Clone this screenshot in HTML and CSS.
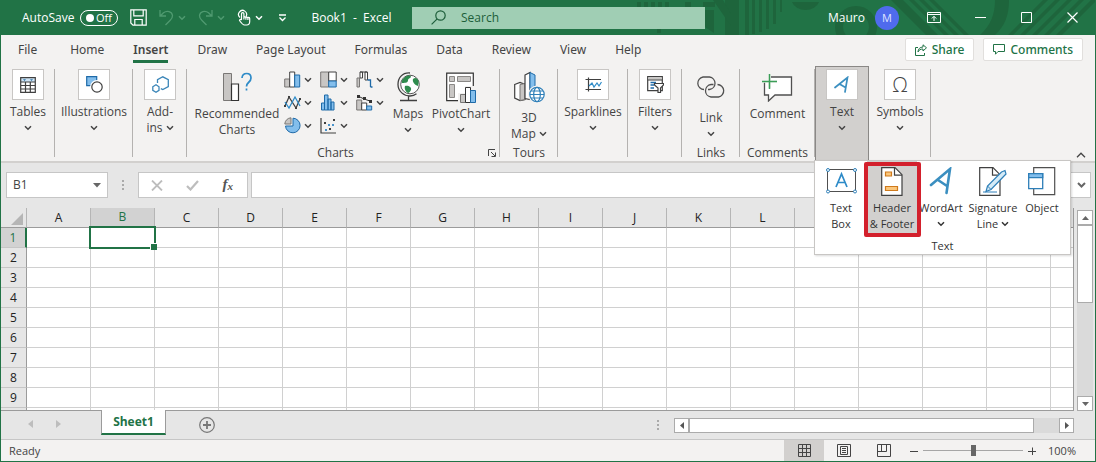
FILE: index.html
```html
<!DOCTYPE html>
<html lang="en">
<head>
<meta charset="utf-8">
<title>Book1 - Excel</title>
<link rel="stylesheet" href="styles.css">
</head>
<body>
<svg class="defs" aria-hidden="true">
  <symbol id="chev" viewBox="0 0 8 6"><path d="M1 1.2 4 4.2 7 1.2" fill="none" stroke="currentColor" stroke-width="1.5"/></symbol>
</svg>
<div class="window">
  <header class="titlebar">
    <svg class="pattern" viewBox="0 0 460 35" width="460" height="35" aria-hidden="true">
      <g fill="#1e653c">
        <path d="M2 2h4v5H2zM9 2h4v5H9zM16 2h4v5h-4zM23 2h4v5h-4zM30 2h4v5h-4zM50 2h6v5h-6zM68 2h12v5H68zM22 29h4v4h-4zM70 10h9v23l-9-6zM90 0h14v35H90zM110 0h4v35h-4zM117 0h3v34h-3zM124 0h3v32h-3zM131 0h3v29h-3zM138 0h3v24h-3zM145 0h2v12h-2z"/>
        <path d="M78 0h10l8 14v12zM157 2h27a14 11 0 0 1-27 0z"/>
        <path d="M256 0h12l35 35h-12zM274 0h5l35 35h-5zM284 0h5l35 35h-5zM294 0h5l35 35h-5z"/>
        <path d="M360 0h14c0 15-4 26-14 35h-15c11-10 15-21 15-35z"/>
        <path d="M408 0h5l-35 35h-5zM420 0h5l-35 35h-5zM432 0h5l-35 35h-5zM444 0h5l-35 35h-5zM456 0h4v2l-33 33h-6z"/>
      </g>
      <circle cx="221" cy="27" r="17" fill="none" stroke="#1e653c" stroke-width="8"/>
    </svg>
    <div class="quick">
      <label class="autosave">AutoSave <span class="toggle"><input type="checkbox"><span class="knob"></span>Off</span></label>
      <button class="qbtn save" aria-label="Save"><svg width="17" height="17" viewBox="0 0 17 17" fill="none" stroke="currentColor" stroke-width="1.2"><path d="M.8.8h15.4v15.4H3L.8 14zM3.8.8v6h9.4v-6M4.8 16v-5.5h7.400V16"/></svg></button>
      <button class="qbtn dim" aria-label="Undo"><svg width="15" height="17" viewBox="0 0 15 17" fill="none" stroke="currentColor" stroke-width="1.3"><path d="M1 1v6h6M1.200 7 4.500 3.800C8 1 13 2.500 13.500 6.500 13.700 8.500 12.500 10 11 11.500L6.500 16"/></svg></button>
      <button class="qdrop dim" aria-label="Undo history"><svg width="8" height="6"><use href="#chev"/></svg></button>
      <button class="qbtn dim" aria-label="Redo"><svg width="15" height="17" viewBox="0 0 15 17" fill="none" stroke="currentColor" stroke-width="1.3"><path d="M14 1v6H8M13.800 7 10.500 3.800C7 1 2 2.500 1.500 6.500 1.300 8.500 2.500 10 4 11.500L8.500 16"/></svg></button>
      <button class="qdrop dim" aria-label="Redo history"><svg width="8" height="6"><use href="#chev"/></svg></button>
      <button class="qbtn" aria-label="Touch mode"><svg width="14" height="17" viewBox="0 0 14 17" fill="none" stroke="currentColor" stroke-width="1.200"><path d="M3 8.500A4 4 0 1 1 9 7.500M4.500 11V4.800a1.200 1.200 0 0 1 2.400 0V8.500c0-1 2-1 2 .2 0-1 2-1 2 .3 0-1 1.800-.8 1.800.5v3c0 2-1 3.500-3 3.500H7.500c-1.500 0-2.500-1-5-4.500 0-1 1-1.500 2-.5M6.900 8.500v2M8.900 8.700v2M10.900 9v2"/></svg></button>
      <button class="qdrop" aria-label="Touch mode options"><svg width="8" height="6"><use href="#chev"/></svg></button>
      <button class="qdrop customize" aria-label="Customize toolbar"><svg width="9" height="8" viewBox="0 0 9 8" fill="none" stroke="currentColor" stroke-width="1.300"><path d="M1 1h7M1.500 3.500l3 3 3-3"/></svg></button>
    </div>
    <div class="doc-title">Book1&nbsp; -&nbsp; Excel</div>
    <label class="search">
      <svg width="15" height="15" viewBox="0 0 15 15" fill="none" stroke="#1d5e3a" stroke-width="1.200"><circle cx="9.500" cy="5.500" r="4.700"/><path d="M6.200 8.800.6 14.400"/></svg>
      <input type="text" placeholder="Search" aria-label="Search">
    </label>
    <div class="account">
      <span>Mauro</span>
      <button class="avatar">M</button>
    </div>
    <div class="winbtns">
      <button aria-label="Ribbon display options"><svg width="14" height="11" viewBox="0 0 14 11" fill="none" stroke="#fff"><path d="M.5.500h13v10H.5zM.5 2.500h13M7 9V4.500M4.800 6.500 7 4.300l2.200 2.200"/></svg></button>
      <button aria-label="Minimize"><svg width="11" height="11" viewBox="0 0 11 11" stroke="#fff"><path d="M0 5.500h11"/></svg></button>
      <button aria-label="Maximize"><svg width="11" height="11" viewBox="0 0 11 11" fill="none" stroke="#fff"><path d="M.5.500h10v10H.5z"/></svg></button>
      <button aria-label="Close"><svg width="11" height="11" viewBox="0 0 11 11" stroke="#fff" stroke-width="1.200"><path d="M.5.500l10 10M10.500.5l-10 10"/></svg></button>
    </div>
  </header>

  <nav class="tabs">
    <a href="#" class="file">File</a><a href="#">Home</a><a href="#" class="active">Insert</a><a href="#">Draw</a><a href="#">Page Layout</a><a href="#">Formulas</a><a href="#">Data</a><a href="#">Review</a><a href="#">View</a><a href="#">Help</a>
    <div class="tab-actions">
      <button><svg width="12" height="12" viewBox="0 0 12 12" fill="none" stroke="currentColor"><path d="M3 3.500H.5v8h9V9M8 .8l3.500 3L8 7V5C5.500 5 4 6 3 8c0-3 2-5 5-5z"/></svg>Share</button>
      <button><svg width="12" height="11" viewBox="0 0 12 11" fill="none" stroke="currentColor"><path d="M.5.500h11v7H5l-2.500 2.700V7.500h-2z"/></svg>Comments</button>
    </div>
  </nav>

  <section class="ribbon" aria-label="Insert">
    <div class="group w54"><button class="cmd">
      <span class="tile"><svg width="16" height="16" viewBox="0 0 16 16"><path d="M.7.700h14.600v14.600H.7z" fill="#fff"/><path d="M1 1h14v4H1z" fill="#cfe4f5"/><path d="M.7.700h14.600v14.600H.7zM.7 5h14.600M.7 8.500h14.600M.7 12h14.600M5.500 5v10M10.300 5v10" fill="none" stroke="#404040" stroke-width="1.200"/><path d="M3 2.300h3L4.500 4zM10 2.300h3L11.500 4z" fill="#2e75a8"/></svg></span>
      <span class="label">Tables</span><svg class="chev" width="8" height="6"><use href="#chev"/></svg></button></div>
    <div class="group w78"><button class="cmd">
      <span class="tile"><svg width="17" height="17" viewBox="0 0 17 17"><path d="M.7.700h10v9h-10z" fill="#83beec" stroke="#1e6aa8" stroke-width="1.200"/><circle cx="11" cy="11" r="7" fill="#fff"/><circle cx="11" cy="11" r="5.200" fill="#fff" stroke="#404040" stroke-width="1.200"/></svg></span>
      <span class="label">Illustrations</span><svg class="chev" width="8" height="6"><use href="#chev"/></svg></button></div>
    <div class="group w54"><button class="cmd">
      <span class="tile"><svg width="17" height="17" viewBox="0 0 17 17" fill="none" stroke="#3b86b8" stroke-width="1.300"><path d="M5.500 7V3.600L10.800.8l5.500 2.800v7l-5.500 3-2-1M.8 10.800l3.200-2 3 2v3.500l-3 1.900-3.200-1.900z"/></svg></span>
      <span class="label">Add-<br>ins <svg width="8" height="6"><use href="#chev"/></svg></span></button></div>

    <div class="group charts">
      <div class="group-body">
        <button class="cmd big w90"><span class="icon"><svg width="30" height="30" viewBox="0 0 30 30"><path d="M1.500 1.500h8v27h-8z" fill="#c8c6c4" stroke="#797775"/><path d="M9.500 12h7v16.500h-7z" fill="#fff" stroke="#333" stroke-width="1.200"/><path d="M20 6c.5-6 9-6 9 0 0 4.500-4.500 4-4.500 8.500M24.500 16.500v2" fill="none" stroke="#2e8bc8" stroke-width="1.700"/></svg></span>
          <span class="label">Recommended<br>Charts</span></button>
        <div class="gallery">
          <button aria-label="Column chart"><svg width="17" height="17" viewBox="0 0 17 17" stroke="#404040"><path d="M.7 8h5v8h-5z" fill="#c8c6c4" stroke="#797775"/><path d="M5.700 1h5v15h-5z" fill="#fff"/><path d="M10.700 4h5v12h-5z" fill="#83beec" stroke="#1e6aa8"/></svg><svg width="8" height="6"><use href="#chev"/></svg></button>
          <button aria-label="Hierarchy chart"><svg width="17" height="17" viewBox="0 0 17 17" stroke="#404040"><path d="M.7 1h8v15h-8z" fill="#c8c6c4" stroke="#797775"/><path d="M8.700 1h7.500v9H8.700z" fill="#fff"/><path d="M8.700 10h7.500v6H8.700z" fill="#83beec" stroke="#1e6aa8"/></svg><svg width="8" height="6"><use href="#chev"/></svg></button>
          <button aria-label="Waterfall chart"><svg width="17" height="17" viewBox="0 0 17 17"><path d="M1 7h2.500v9H1z" fill="#c8c6c4" stroke="#797775"/><path d="M4 1h2.500v6H4zM9 1h2.500v8H9zM4 1h7" fill="#fff" stroke="#404040"/><path d="M12 9h2.500v7M11.500 9h3M14.500 16h2" fill="none" stroke="#1e6aa8" stroke-width="1.300"/></svg><svg width="8" height="6"><use href="#chev"/></svg></button>
          <button aria-label="Line chart"><svg width="17" height="17" viewBox="0 0 17 17" fill="none" stroke-width="1.300"><path d="M1 12 5 3l7 11 4-9" stroke="#404040"/><path d="M1 8l4 6 6-11 5 9" stroke="#2e8bc8"/><path d="M0 11h2v2H0zM4 2h2v2H4zM15 4h2v2h-2zM11 13h2v2h-2z" fill="#404040"/></svg><svg width="8" height="6"><use href="#chev"/></svg></button>
          <button aria-label="Statistic chart"><svg width="17" height="17" viewBox="0 0 17 17" fill="#83beec" stroke="#1e6aa8"><path d="M1.500 9h3v7h-3zM4.500 1h3.500v15H4.500zM8 5h3v11H8zM11 8h3v8h-3z"/></svg><svg width="8" height="6"><use href="#chev"/></svg></button>
          <button aria-label="Combo chart"><svg width="17" height="17" viewBox="0 0 17 17"><path d="M.7 6h5v10h-5z" fill="#c8c6c4" stroke="#797775"/><path d="M5.700 9h5v7h-5z" fill="#fff" stroke="#404040"/><path d="M10.700 12h5v4h-5z" fill="#83beec" stroke="#1e6aa8"/><path d="M2 2l6 3 6 2" fill="none" stroke="#333"/><path d="M1 1h3v3H1zM7 3h3v3H7zM13 6h3v3h-3z" fill="#333"/></svg><svg width="8" height="6"><use href="#chev"/></svg></button>
          <button aria-label="Pie chart"><svg width="17" height="17" viewBox="0 0 17 17"><path d="M9 1.200A7.300 7.300 0 1 1 1.500 9H9z" fill="#83beec" stroke="#1e6aa8"/><path d="M7 .800V7H.8A6.500 6.500 0 0 1 7 .8z" fill="#c8c6c4" stroke="#797775"/></svg><svg width="8" height="6"><use href="#chev"/></svg></button>
          <button aria-label="Scatter chart"><svg width="17" height="17" viewBox="0 0 17 17"><path d="M1 1v15h15" fill="none" stroke="#404040" stroke-width="1.200"/><path d="M4 5h2v2H4zM13 2h2v2h-2zM9 11h2v2H9z" fill="#404040"/><path d="M8 7h2v2H8zM12 7h2v2h-2zM5 12h2v2H5z" fill="#4a94cc"/></svg><svg width="8" height="6"><use href="#chev"/></svg></button>
        </div>
        <button class="cmd big w36"><span class="icon"><svg width="24" height="30" viewBox="0 0 24 30"><circle cx="14" cy="12.500" r="9.300" fill="#fff" stroke="#555"/><path d="M8 6c3-3 6-3 7-1.500 0 2-3 1.500-3 4S8 11 6 11c-.5-2 0-3 2-5zM17 7c2-2 4-1 5 1 1 2 .5 4 0 6-3-1-6-4-5-7zM9 14c3-1 7 1 6 4-1 2-2 3-3 3-2-1-4-4-3-7z" fill="#2f8c4e"/><path d="M14 1C6 .5 2 6 2 12.500c0 7 6 11.500 12 11.500 3 0 5-1 6.500-2.200M12.500 24v4.500M4 28.500h17" fill="none" stroke="#404040" stroke-width="1.300"/></svg></span>
          <span class="label">Maps</span><svg class="chev" width="8" height="6"><use href="#chev"/></svg></button>
        <button class="cmd big w62"><span class="icon"><svg width="30" height="31" viewBox="0 0 30 31"><path d="M.7 1.200h26.600v27.500H.7z" fill="#fff" stroke="#333" stroke-width="1.200"/><path d="M3.500 4.500h5v5h-5zM11.500 4.500h13v5h-13zM3.500 12.500h5v13h-5z" fill="#c8c6c4" stroke="#8a8886"/><path d="M12 21h7v-7h9v17H12z" fill="#f3f2f1"/><path d="M14.500 22.500h5v8h-5z" fill="#c8c6c4" stroke="#797775"/><path d="M19.500 15.500h5v15h-5z" fill="#fff" stroke="#333"/><path d="M24.500 18.500h5v12h-5z" fill="#83beec" stroke="#1e6aa8"/></svg></span>
          <span class="label">PivotChart</span><svg class="chev" width="8" height="6"><use href="#chev"/></svg></button>
      </div>
      <div class="group-name">Charts</div>
      <button class="launcher" aria-label="Chart options"><svg width="8" height="8" viewBox="0 0 8 8" fill="none" stroke="#444"><path d="M.5 7V.500H7M3 3l4 4M7.500 3.500v4h-4"/></svg></button>
    </div>

    <div class="group w58">
      <button class="cmd big low"><span class="icon"><svg width="31" height="32" viewBox="0 0 31 32"><path d="M.7 13.500 6 11.500l5 2v15l-5 1-5.300-2.500z" fill="#fff" stroke="#404040" stroke-width="1.200"/><path d="M6 13.500l5-1v16l-5 1z" fill="#c8c6c4" stroke="#797775"/><path d="M11 4l5-2.500v27l-5-1z" fill="#fff" stroke="#404040" stroke-width="1.200"/><path d="M16 1.500l5 2.500v24h-5z" fill="#83beec" stroke="#1e6aa8"/><circle cx="23" cy="23.500" r="9" fill="#f3f2f1"/><g fill="#fff" stroke="#2e7fb8" stroke-width="1.200"><circle cx="23" cy="23.500" r="7.200"/><ellipse cx="23" cy="23.500" rx="3.300" ry="7.200"/><path d="M17 20h12M16 23.500h14M17 27h12"/></g></svg></span>
        <span class="label">3D<br>Map <svg width="8" height="6"><use href="#chev"/></svg></span></button>
      <div class="group-name">Tours</div></div>
    <div class="group w70"><button class="cmd">
      <span class="tile"><svg width="17" height="15" viewBox="0 0 17 15" fill="none"><path d="M3.500.500v14M.5 2.500H16M.5 12.500H16" stroke="#404040" stroke-width="1.200"/><path d="M4 9l3-3 2 4 3-4 2 3 2.500-4" stroke="#2e8bc8" stroke-width="1.200"/></svg></span>
      <span class="label">Sparklines</span><svg class="chev" width="8" height="6"><use href="#chev"/></svg></button></div>
    <div class="group w54"><button class="cmd">
      <span class="tile"><svg width="17" height="17" viewBox="0 0 17 17"><path d="M.7.700h14.600v14H.7z" fill="#fff" stroke="#404040" stroke-width="1.200"/><path d="M1.300 1.300h13.400v2.400H1.300z" fill="#c8c6c4"/><path d="M.7 4h14.600" stroke="#404040"/><path d="M3.500 6.500H9M3.500 9H7M3.500 12H7" stroke="#1e6aa8" stroke-width="1.500"/><path d="M7.500 7.500h9v1.500l-3 3v4.500h-2.500V12L7.500 9z" fill="#fff" stroke="#404040" stroke-width="1.200"/></svg></span>
      <span class="label">Filters</span><svg class="chev" width="8" height="6"><use href="#chev"/></svg></button></div>
    <div class="group w58">
      <button class="cmd big low"><span class="icon"><svg width="30" height="22" viewBox="0 0 30 22" fill="none" stroke="#505050" stroke-width="1.300"><path d="M8 13.500A6.300 6.300 0 0 1 7 1h6.500a6.300 6.300 0 0 1 0 12.500H12M21.500 8.500A6.300 6.300 0 0 1 22.500 21H15a6.300 6.300 0 0 1 0-12.500h2.500"/></svg></span>
        <span class="label">Link</span><svg class="chev" width="8" height="6"><use href="#chev"/></svg></button>
      <div class="group-name">Links</div></div>
    <div class="group w75">
      <button class="cmd big"><span class="icon"><svg width="31" height="29" viewBox="0 0 31 29" fill="none"><path d="M2.500 4h27v18H13l-6.500 6v-6h-4z" fill="#fff" stroke="#505050" stroke-width="1.300"/><path d="M0 0h9v7.300h6v2.400H9V15H6V9.700H0z" fill="#f3f2f1"/><path d="M7.500 1v15M0 8.500h15" stroke="#3a9e57" stroke-width="1.500"/></svg></span>
        <span class="label">Comment</span></button>
      <div class="group-name">Comments</div></div>
    <div class="group open w54"><button class="cmd" aria-expanded="true">
      <span class="tile"><svg width="16" height="18" viewBox="0 0 16 18" fill="none" stroke="#3b8fc0" stroke-width="1.700" stroke-linecap="round"><path d="M1 11.500 13.500 1.500 11 16M5.500 8l6 3.500"/></svg></span>
      <span class="label">Text</span><svg class="chev" width="8" height="6"><use href="#chev"/></svg></button>
      <div class="menu">
        <div class="menu-items">
          <button class="item w52"><span class="micon"><svg width="31" height="26" viewBox="0 0 31 26" fill="none"><path d="M1.500 1.500h28v22h-28z" fill="#fff" stroke="#505050"/><g fill="#fff" stroke="#2e7fb8"><circle cx="2" cy="2" r="1.500"/><circle cx="29" cy="2" r="1.500"/><circle cx="2" cy="23.500" r="1.500"/><circle cx="29" cy="23.500" r="1.500"/></g><path d="M10 19 15.500 6 21 19M12 14.500h7" stroke="#2e8bc8" stroke-width="1.700"/></svg></span><span class="label">Text<br>Box</span></button>
          <button class="item picked w50"><span class="micon"><svg width="22" height="29" viewBox="0 0 22 29"><path d="M.7.700h13.300l7 7v20.600H.7z" fill="#fff" stroke="#404040" stroke-width="1.200"/><path d="M13.500.700v7.500H21" fill="none" stroke="#404040" stroke-width="1.200"/><path d="M4.500 5h6v4h-6zM4.500 19.500h12v4h-12z" fill="#fbc77c" stroke="#d07a1c" stroke-width="1.200"/></svg></span><span class="label">Header<br>&amp; Footer</span></button>
          <button class="item w48"><span class="micon"><svg width="24" height="29" viewBox="0 0 24 29" fill="none" stroke="#3b8fc0" stroke-width="2.600" stroke-linecap="round"><path d="M2 18 21 2 17.500 26M9 13l9 6"/></svg></span><span class="label">WordArt</span><svg class="chev" width="8" height="6"><use href="#chev"/></svg></button>
          <button class="item w56"><span class="micon"><svg width="28" height="29" viewBox="0 0 28 29"><path d="M.7.700h13.300l7 7v20.600H.7z" fill="#fff" stroke="#404040" stroke-width="1.200"/><path d="M13.500.700v7.500H21" fill="none" stroke="#404040" stroke-width="1.200"/><path d="M22.500 5 26 3.500 27 7 12 22.500l-5 2 1.500-5.500z" fill="#d5ebf7" stroke="#2e7fb8" stroke-width="1.200"/><path d="M8.500 19l3.500 3.500M4 25h14" stroke="#2e7fb8" fill="none"/></svg></span><span class="label">Signature<br>Line <svg width="8" height="6"><use href="#chev"/></svg></span></button>
          <button class="item w42"><span class="micon"><svg width="28" height="29" viewBox="0 0 28 29"><path d="M5.700.700h21v27h-21z" fill="#fff" stroke="#505050" stroke-width="1.200"/><path d="M.7 6.700h14v15H.7z" fill="#fff" stroke="#2e7fb8" stroke-width="1.300"/><path d="M.7 6.700h14v4H.7z" fill="#83beec" stroke="#2e7fb8" stroke-width="1.300"/></svg></span><span class="label">Object</span></button>
        </div>
        <div class="group-name">Text</div>
      </div>
    </div>
    <div class="group w62"><button class="cmd">
      <span class="tile omega">Ω</span>
      <span class="label">Symbols</span><svg class="chev" width="8" height="6"><use href="#chev"/></svg></button></div>
    <button class="collapse" aria-label="Collapse ribbon"><svg width="10" height="6" viewBox="0 0 10 6" fill="none" stroke="#444" stroke-width="1.300"><path d="M1 5.200 5 1.200l4 4"/></svg></button>
  </section>

  <div class="formula-row">
    <div class="namebox"><input type="text" value="B1" aria-label="Name box"><button aria-label="Names"><svg width="8" height="5" viewBox="0 0 8 5"><path d="M0 0h8L4 4.500z" fill="#666"/></svg></button></div>
    <svg class="grip" width="2" height="10" viewBox="0 0 2 10" fill="#aaa"><path d="M0 0h2v2H0zM0 4h2v2H0zM0 8h2v2H0z"/></svg>
    <div class="fx">
      <button aria-label="Cancel"><svg width="12" height="11" viewBox="0 0 12 11" stroke="#bdbdbd" stroke-width="1.800"><path d="M1 .500l10 10M11 .500l-10 10"/></svg></button>
      <button aria-label="Enter"><svg width="13" height="11" viewBox="0 0 13 11" fill="none" stroke="#bdbdbd" stroke-width="2.200"><path d="M1 6l3.500 3.500L12 1"/></svg></button>
      <button class="fn" aria-label="Insert function">f<sub>x</sub></button>
    </div>
    <div class="formula"><input type="text" aria-label="Formula bar"><button aria-label="Expand"><svg width="9" height="6" viewBox="0 0 9 6" fill="none" stroke="#666" stroke-width="2"><path d="M1 1l3.500 3.500L8 1"/></svg></button></div>
  </div>

  <main class="sheet">
    <div class="cells">
      <table>
        <thead><tr><th class="corner"><svg width="12" height="12" viewBox="0 0 12 12"><path d="M12 0v12H0z" fill="#b5b5b5"/></svg></th><th>A</th><th class="sel">B</th><th>C</th><th>D</th><th>E</th><th>F</th><th>G</th><th>H</th><th>I</th><th>J</th><th>K</th><th>L</th><th></th><th></th><th></th><th></th><th></th></tr></thead>
        <tbody>
        <tr><th class="sel">1</th><td></td><td class="cursor"><span class="frame"></span></td><td></td><td></td><td></td><td></td><td></td><td></td><td></td><td></td><td></td><td></td><td></td><td></td><td></td><td></td><td></td></tr>
        <tr><th>2</th><td></td><td></td><td></td><td></td><td></td><td></td><td></td><td></td><td></td><td></td><td></td><td></td><td></td><td></td><td></td><td></td><td></td></tr>
        <tr><th>3</th><td></td><td></td><td></td><td></td><td></td><td></td><td></td><td></td><td></td><td></td><td></td><td></td><td></td><td></td><td></td><td></td><td></td></tr>
        <tr><th>4</th><td></td><td></td><td></td><td></td><td></td><td></td><td></td><td></td><td></td><td></td><td></td><td></td><td></td><td></td><td></td><td></td><td></td></tr>
        <tr><th>5</th><td></td><td></td><td></td><td></td><td></td><td></td><td></td><td></td><td></td><td></td><td></td><td></td><td></td><td></td><td></td><td></td><td></td></tr>
        <tr><th>6</th><td></td><td></td><td></td><td></td><td></td><td></td><td></td><td></td><td></td><td></td><td></td><td></td><td></td><td></td><td></td><td></td><td></td></tr>
        <tr><th>7</th><td></td><td></td><td></td><td></td><td></td><td></td><td></td><td></td><td></td><td></td><td></td><td></td><td></td><td></td><td></td><td></td><td></td></tr>
        <tr><th>8</th><td></td><td></td><td></td><td></td><td></td><td></td><td></td><td></td><td></td><td></td><td></td><td></td><td></td><td></td><td></td><td></td><td></td></tr>
        <tr><th>9</th><td></td><td></td><td></td><td></td><td></td><td></td><td></td><td></td><td></td><td></td><td></td><td></td><td></td><td></td><td></td><td></td><td></td></tr>
        <tr><th></th><td></td><td></td><td></td><td></td><td></td><td></td><td></td><td></td><td></td><td></td><td></td><td></td><td></td><td></td><td></td><td></td><td></td></tr>
        </tbody>
      </table>
    </div>
    <div class="vscroll">
      <button aria-label="Scroll up"><svg width="7" height="4" viewBox="0 0 7 4"><path d="M0 4 3.500 0 7 4z" fill="#666"/></svg></button>
      <div class="thumb"></div>
      <div class="track"></div>
      <button aria-label="Scroll down"><svg width="7" height="4" viewBox="0 0 7 4"><path d="M0 0h7L3.500 4z" fill="#666"/></svg></button>
    </div>
  </main>

  <div class="sheetbar">
    <div class="sheetnav">
      <button aria-label="Previous sheet"><svg width="5" height="8" viewBox="0 0 5 8"><path d="M5 0v8L0 4z" fill="#bdbdbd"/></svg></button>
      <button aria-label="Next sheet"><svg width="5" height="8" viewBox="0 0 5 8"><path d="M0 0v8l5-4z" fill="#bdbdbd"/></svg></button>
    </div>
    <button class="sheettab">Sheet1</button>
    <button class="addsheet" aria-label="New sheet"><svg width="16" height="16" viewBox="0 0 16 16" fill="none" stroke="#777"><circle cx="8" cy="8" r="7.300" stroke-width="1.200"/><path d="M8 4v8M4 8h8" stroke-width="1.800"/></svg></button>
    <svg class="grip hgrip" width="2" height="10" viewBox="0 0 2 10" fill="#aaa"><path d="M0 0h2v2H0zM0 4h2v2H0zM0 8h2v2H0z"/></svg>
    <div class="hscroll">
      <button aria-label="Scroll left"><svg width="4" height="7" viewBox="0 0 4 7"><path d="M4 0v7L0 3.500z" fill="#555"/></svg></button>
      <div class="thumb"></div>
      <div class="track"></div>
      <button aria-label="Scroll right"><svg width="4" height="7" viewBox="0 0 4 7"><path d="M0 0v7l4-3.500z" fill="#555"/></svg></button>
    </div>
  </div>

  <footer class="status">
    <span class="ready">Ready</span>
    <div class="views">
      <button class="on" aria-label="Normal view"><svg width="13" height="13" viewBox="0 0 13 13" fill="none" stroke="#444"><path d="M.5.500h12v12H.5zM.5 4.500h12M.5 8.500h12M4.500.500v12M8.500.500v12"/></svg></button>
      <button aria-label="Page layout view"><svg width="14" height="13" viewBox="0 0 14 13" fill="none" stroke="#444"><path d="M.5.500h13v12H.5zM3.500 2.500h7v8h-7zM5 4.500h4M5 6.500h4M5 8.500h4"/></svg></button>
      <button aria-label="Page break view"><svg width="14" height="13" viewBox="0 0 14 13" fill="none" stroke="#444"><path d="M.5.500h13v12H.5zM4.500.500v7M9.500.500v7h-9"/></svg></button>
    </div>
    <div class="zoom">
      <button aria-label="Zoom out"><svg width="8" height="8" viewBox="0 0 8 8" stroke="#444"><path d="M0 4.500h8"/></svg></button>
      <input type="range" min="0" max="100" value="50" aria-label="Zoom">
      <button aria-label="Zoom in"><svg width="8" height="8" viewBox="0 0 8 8" stroke="#444"><path d="M0 4.500h8M4.500.500v8"/></svg></button>
      <span class="pct">100%</span>
    </div>
  </footer>
</div>
</body>
</html>
```
FILE: styles.css
```css
* { box-sizing: border-box; }
body { margin: 0; font-family: "Open Sans", "Noto Sans", sans-serif; font-size: 12px; line-height: 16px; color: #444; }
button, input { font: inherit; color: inherit; border: 0; background: none; padding: 0; margin: 0; outline: 0; }
svg { display: block; flex: none; }
.defs { display: none; }
.window { display: flex; flex-direction: column; height: 100vh; border: 1px solid #217346; border-top: 0; background: #e6e6e6; overflow: hidden; }

/* title bar */
.titlebar { position: relative; display: flex; align-items: center; flex: none; height: 35px; background: #217346; color: #fff; }
.titlebar > * { position: relative; }
.titlebar > .pattern { position: absolute; right: 0; top: 0; }
.quick { display: flex; align-items: center; flex: none; width: 290px; padding-left: 21px; }
.autosave { display: flex; align-items: center; flex: none; width: 108px; white-space: nowrap; }
.toggle { display: flex; align-items: center; justify-content: space-between; flex: none; width: 38px; height: 16px; margin: 0 12px 0 auto; padding: 0 5px 0 3px; border: 1px solid #fff; border-radius: 8px; font-size: 11px; line-height: 14px; }
.toggle input { appearance: none; width: 0; height: 0; }
.knob { width: 8px; height: 8px; border-radius: 50%; background: #fff; }
.qbtn { display: flex; justify-content: center; width: 16px; }
.qbtn.save { margin-right: 13px; }
.qdrop { display: flex; justify-content: center; width: 8px; margin: 0 12px 0 4px; }
.qdrop.customize { margin-left: 3px; }
.dim { color: #4f9a70; }
.doc-title { flex: none; width: 121px; text-align: center; }
.search { display: flex; align-items: center; gap: 15px; flex: 0 1 293px; height: 22px; padding-left: 19px; background: #a0ceb4; }
.search input { flex: 1; min-width: 0; }
.search input::placeholder { color: #1d5e3a; opacity: 1; }
.account { display: flex; align-items: center; gap: 10px; margin-left: auto; }
.avatar { width: 24px; height: 24px; border-radius: 50%; background: #4f6bed; color: #dfe5ff; font-size: 11px; }
.winbtns { display: flex; margin-left: 12px; }
.winbtns button { display: flex; align-items: center; justify-content: center; width: 46px; height: 34px; }

/* tab strip */
.tabs { display: flex; flex: none; height: 31px; padding-left: 17px; gap: 29px; background: #f3f2f1; font-family: "Noto Sans", "Open Sans", sans-serif; }
.tabs a { align-self: flex-start; padding-top: 7px; height: 28px; color: #444; text-decoration: none; white-space: nowrap; }
.tabs .file { margin-right: 4px; }
.tabs a.active { font-weight: 600; border-bottom: 3px solid #217346; }
.tab-actions { display: flex; gap: 9px; margin: 3px 12px 5px auto; }
.tab-actions button { display: flex; align-items: center; gap: 5px; padding: 0 9px; background: #fff; border: 1px solid #e1dfdd; border-radius: 2px; color: #217346; font-weight: 500; }

/* ribbon */
.ribbon { display: flex; flex: none; position: relative; z-index: 2; height: 97px; background: #f3f2f1; border-bottom: 2px solid #d2d0ce; }
.group { position: relative; display: flex; flex-direction: column; flex: none; background: linear-gradient(#b4b2b0, #b4b2b0) no-repeat right top 3px / 1px 88px; }
.w36 { width: 36px; } .w42 { width: 42px; } .w48 { width: 48px; } .w50 { width: 50px; } .w52 { width: 52px; }
.w54 { width: 54px; } .w56 { width: 56px; } .w58 { width: 58px; } .w62 { width: 62px; } .w70 { width: 70px; }
.w75 { width: 75px; } .w78 { width: 78px; } .w90 { width: 90px; }
.charts { width: 313px; }
.charts .group-name { padding-right: 16px; }
.cmd { display: flex; flex-direction: column; align-items: center; padding-top: 3px; text-align: center; }
.label { white-space: nowrap; }
.label svg { display: inline-block; vertical-align: 1px; }
.chev { margin-top: 5px; }
.tile { display: flex; align-items: center; justify-content: center; width: 32px; height: 31px; margin-bottom: 4px; background: #fff; border: 1px solid #c8c6c4; }
.omega { font-size: 20px; line-height: 28px; font-weight: 300; }
.cmd.big { padding-top: 5px; }
.icon { display: flex; align-items: center; height: 32px; margin-bottom: 3px; }
.low .icon { margin-bottom: 7px; }
.group-body { display: flex; align-items: flex-start; padding-left: 5px; }
.group-name { margin-top: auto; text-align: center; }
.gallery { display: grid; grid-template-columns: 36px 36px 36px; grid-auto-rows: 17px; row-gap: 6px; padding-top: 5px; }
.gallery button { display: flex; align-items: center; gap: 3px; padding-left: 2px; }
.charts .w62 { margin-left: 4px; }
.launcher { position: absolute; right: 4px; bottom: 4px; }
.open { background: #d2d0ce; border: 1px solid #8a8886; border-bottom: 0; }
.open .cmd { padding-top: 2px; }
.collapse { margin: auto 9px 3px auto; }

/* drop-down gallery */
.menu { position: absolute; left: -2px; top: 93px; width: 257px; height: 95px; display: flex; flex-direction: column; background: #fff; border: 1px solid #c8c6c4; box-shadow: 1px 1px 2px rgba(0, 0, 0, .15); color: #333; font-size: 11px; }
.menu-items { display: flex; }
.item { display: flex; flex-direction: column; align-items: center; flex: none; height: 76px; padding-top: 5px; text-align: center; }
.micon { display: flex; align-items: center; height: 30px; margin-bottom: 4px; }
.picked { position: relative; background: #d2d0ce; }
.picked::after { content: ""; position: absolute; inset: 1px -4px 0 -3px; border: 4px solid #d3202c; border-radius: 2px; }

/* formula bar */
.formula-row { display: flex; align-items: center; flex: none; height: 45px; padding: 0 4px 1px 5px; }
.formula-row > div { display: flex; align-items: center; height: 26px; background: #fff; border: 1px solid #c6c6c6; }
.namebox { width: 102px; padding: 0 6px; }
.namebox input { flex: 1; min-width: 0; }
.grip { margin: 0 14px; }
.fx { width: 110px; justify-content: space-between; padding: 0 14px 0 12px; }
.fn { font-family: "Liberation Serif", serif; font-style: italic; font-weight: bold; font-size: 15px; color: #555; }
.fn sub { font-size: 11px; vertical-align: -1px; }
.formula { flex: 1; margin-left: 3px; padding-right: 4px; }
.formula input { flex: 1; min-width: 0; }

/* worksheet */
.sheet { display: flex; flex: 1; min-height: 0; }
.cells { flex: 1; min-width: 0; overflow: hidden; background: #fff; border-right: 1px solid #9b9b9b; border-bottom: 1px solid #9b9b9b; }
table { table-layout: fixed; width: 1114px; border-collapse: separate; border-spacing: 0; color: #222; }
th, td { padding: 0; height: 20px; border-right: 1px solid #d0d0d0; border-bottom: 1px solid #d0d0d0; }
th { background: #e6e6e6; font-weight: 400; line-height: 19px; }
thead th { width: 64px; border-right-color: #b5b5b5; border-bottom-color: #9b9b9b; }
tbody th { border-right-color: #9b9b9b; border-bottom-color: #c6c6c6; }
thead .corner { width: 26px; }
.corner svg { margin: 2px 0 0 10px; }
th.sel { background: #d2d2d2; color: #217346; }
thead th.sel { border-bottom: 2px solid #217346; line-height: 18px; }
tbody th.sel { border-right: 2px solid #217346; }
.cursor { position: relative; }
.frame { position: absolute; inset: -2px; border: 2px solid #217346; }
.frame::after { content: ""; position: absolute; right: -3px; bottom: -3px; width: 6px; height: 6px; background: #217346; border: solid #fff; border-width: 1px 0 0 1px; }
.vscroll { display: flex; flex-direction: column; flex: none; width: 16px; margin: 2px 2px 0 3px; }
.vscroll button, .hscroll button { display: flex; align-items: center; justify-content: center; flex: none; background: #fff; border: 1px solid #ababab; }
.vscroll button { height: 15px; }
.thumb { background: #fff; border: 1px solid #ababab; }
.track { background: #dadada; }
.vscroll .thumb { flex: 78; }
.vscroll .track { flex: 95; }

/* sheet tabs */
.sheetbar { display: flex; align-items: flex-start; flex: none; height: 28px; }
.sheetnav { display: flex; gap: 23px; width: 100px; padding: 9px 0 0 27px; }
.sheettab { width: 65px; height: 25px; margin-top: -1px; background: #fff; border: 1px solid #9b9b9b; border-top: 0; border-bottom: 2px solid #217346; color: #217346; font-weight: 700; }
.addsheet { margin: 6px 0 0 33px; }
.hgrip { margin: 9px 15px 0 auto; }
.hscroll { display: flex; flex: 0 1 400px; height: 15px; margin: 7px 21px 0 0; }
.hscroll button { width: 15px; }
.hscroll .thumb { flex: 345; }
.hscroll .track { flex: 25; }

/* status bar */
.status { display: flex; align-items: center; flex: none; height: 22px; background: #f3f2f1; border-top: 1px solid #c6c6c6; font-size: 11px; }
.ready { padding-left: 8px; }
.views { display: flex; align-self: stretch; margin-left: auto; }
.views button { display: flex; align-items: center; justify-content: center; width: 40px; }
.views .on { background: #d2d0ce; }
.zoom { display: flex; align-items: center; gap: 5px; margin-left: 6px; }
.zoom input { appearance: none; width: 100px; height: 12px; background: linear-gradient(#a6a6a6, #a6a6a6) no-repeat center / 100% 1px; }
.zoom input::-webkit-slider-thumb { appearance: none; width: 5px; height: 11px; background: #666; }
.pct { margin: 0 19px 0 7px; }
```
